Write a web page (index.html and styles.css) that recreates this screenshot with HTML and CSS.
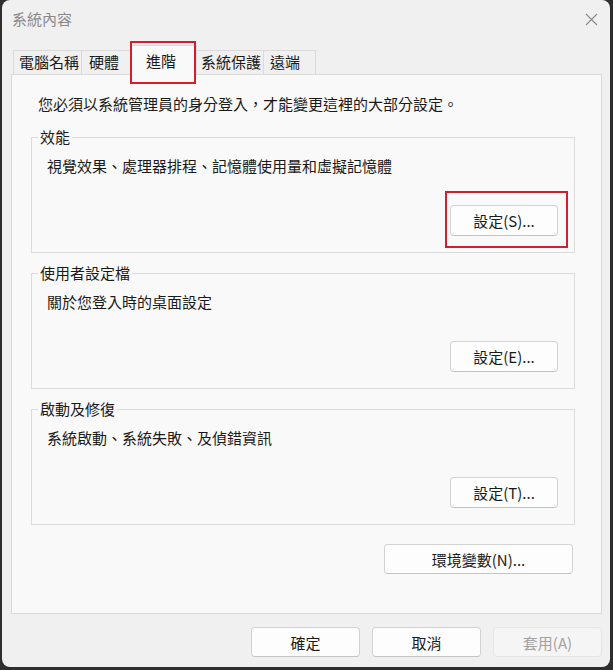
FILE: index.html
```html
<!DOCTYPE html>
<html lang="zh-Hant">
<head>
  <meta charset="UTF-8">
  <meta name="viewport" content="width=device-width, initial-scale=1.0">
  <title>系統內容</title>
  <link rel="stylesheet" href="styles.css">
</head>
<body>
  <div class="window">
    <div class="titlebar">
      <span class="title">系統內容</span>
      <svg class="close" width="13" height="13" viewBox="0 0 13 13">
        <path d="M1 1L12 12M12 1L1 12" stroke="#8a8a8a" stroke-width="1.1" fill="none"/>
      </svg>
    </div>

    <div class="tabs">
      <div class="tab">電腦名稱</div>
      <div class="tab tab-narrow">硬體</div>
      <div class="tab tab-active">進階<span class="mark mark-tab"></span></div>
      <div class="tab">系統保護</div>
      <div class="tab tab-narrow tab-last">遠端</div>
    </div>

    <div class="panel">
      <p class="intro">您必須以系統管理員的身分登入，才能變更這裡的大部分設定。</p>

      <fieldset class="group group-first">
        <legend>效能</legend>
        <p class="desc">視覺效果、處理器排程、記憶體使用量和虛擬記憶體</p>
        <div class="group-actions">
          <button class="btn">設定(S)...<span class="mark mark-btn"></span></button>
        </div>
      </fieldset>

      <fieldset class="group">
        <legend>使用者設定檔</legend>
        <p class="desc">關於您登入時的桌面設定</p>
        <div class="group-actions">
          <button class="btn">設定(E)...</button>
        </div>
      </fieldset>

      <fieldset class="group">
        <legend>啟動及修復</legend>
        <p class="desc">系統啟動、系統失敗、及偵錯資訊</p>
        <div class="group-actions">
          <button class="btn">設定(T)...</button>
        </div>
      </fieldset>

      <div class="env-row">
        <button class="btn btn-wide">環境變數(N)...</button>
      </div>
    </div>

    <div class="footer">
      <button class="btn btn-footer">確定</button>
      <button class="btn btn-footer">取消</button>
      <button class="btn btn-footer btn-disabled" disabled>套用(A)</button>
    </div>
  </div>
</body>
</html>
```

FILE: styles.css
```css
body {
  margin: 0;
  padding: 0;
  background-color: #2e2e2e;
  font-family: "Noto Sans CJK TC", "Noto Sans", sans-serif;
  font-size: 15px;
  color: #1a1a1a;
}

.window {
  box-sizing: border-box;
  width: 608px;
  height: 667px;
  margin: 0 3px 0 2px;
  padding: 0 8px 0 9px;
  background-color: #f0f0f0;
  border-radius: 8px;
  overflow: hidden;
}

.titlebar {
  display: flex;
  align-items: center;
  justify-content: space-between;
  height: 38px;
  padding: 0 4px 0 1px;
}

.title {
  color: #8a8a8a;
  line-height: 20px;
}

.close {
  display: block;
}

.tabs {
  display: flex;
  align-items: flex-end;
  height: 29px;
  margin: 7px 0 0 2px;
}

.tab {
  box-sizing: border-box;
  width: 69px;
  height: 24px;
  padding-left: 5px;
  line-height: 22px;
  background-color: #f0f0f0;
  border: 1px solid #dadada;
  border-bottom: 0;
  white-space: nowrap;
}

.tab + .tab {
  margin-left: -1px;
}

.tab-narrow {
  width: 51px;
  padding-left: 7px;
}

.tab-active {
  position: relative;
  z-index: 1;
  width: 66px;
  height: 30px;
  margin: 0 -2px -1px -2px;
  padding: 2px 0 0 14px;
  line-height: 26px;
  background-color: #f9f9f9;
}

.tab-active + .tab {
  margin-left: 0;
}

.tab-last {
  width: 53px;
  padding-left: 6px;
}

.panel {
  box-sizing: border-box;
  width: 591px;
  height: 540px;
  background-color: #f9f9f9;
  border: 1px solid #dadada;
}

.intro {
  margin: 19px 0 0 26px;
  line-height: 20px;
}

.group {
  margin: 10px 26px 0 19px;
  padding: 0 0 16px;
  min-width: 0;
  border: 1px solid #dcdcdc;
}

.group-first {
  margin-top: 13px;
}

.group legend {
  margin-left: 6px;
  padding: 0 2px;
  line-height: 20px;
}

.desc {
  margin: 9px 0 0 15px;
  line-height: 20px;
}

.group-actions {
  display: flex;
  justify-content: flex-end;
  margin-top: 29px;
  padding-right: 16px;
}

.btn {
  position: relative;
  box-sizing: border-box;
  width: 108px;
  height: 31px;
  padding: 0;
  font-family: inherit;
  font-size: 15px;
  color: #1a1a1a;
  background-color: #fdfdfd;
  border: 1px solid #d3d3d3;
  border-bottom-color: #c4c4c4;
  border-radius: 4px;
}

.btn-wide {
  width: 189px;
  height: 30px;
}

.env-row {
  display: flex;
  justify-content: flex-end;
  margin: 19px 28px 0 0;
}

.footer {
  display: flex;
  justify-content: flex-end;
  gap: 12px;
  margin-top: 13px;
}

.btn-footer {
  width: 109px;
  height: 30px;
}

.btn-disabled {
  color: #a2a2a2;
  background-color: #f5f5f5;
  border-color: #e6e6e6;
}

.mark {
  position: absolute;
  border: 2px solid #d1202b;
  pointer-events: none;
}

.mark-tab {
  top: -5px;
  bottom: -9px;
  left: -2px;
  right: 0;
}

.mark-btn {
  top: -15px;
  bottom: -13px;
  left: -6px;
  right: -11px;
}
```
